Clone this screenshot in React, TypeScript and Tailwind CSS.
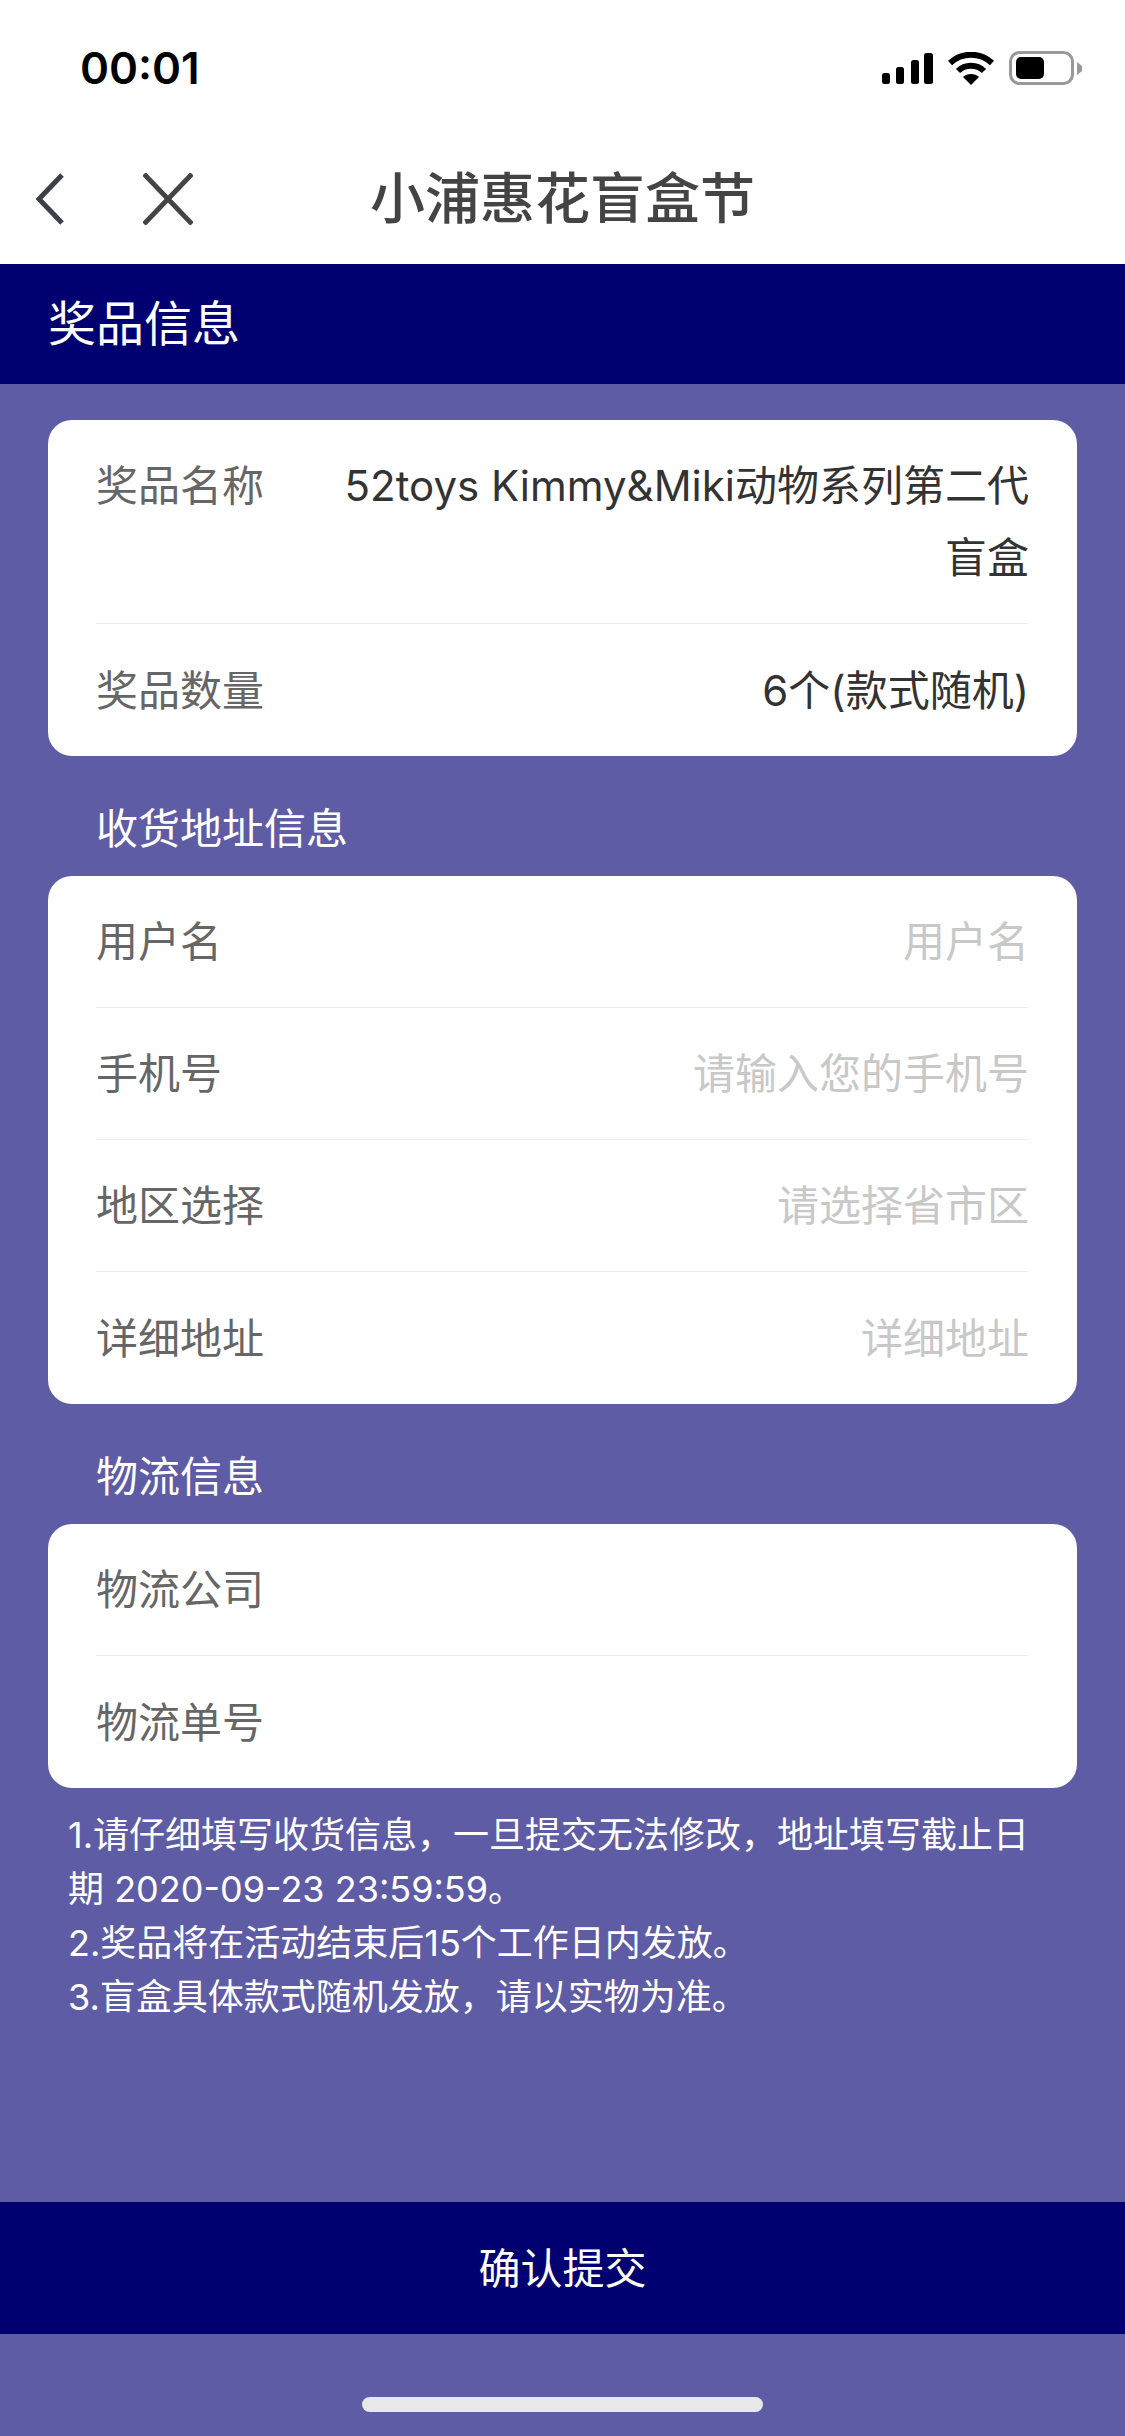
const font = { fontFamily: 'Inter, "Noto Sans CJK SC", sans-serif' };

function Row({ label, value, placeholder, border = true }: { label: string; value?: string; placeholder?: boolean; border?: boolean }) {
  return (
    <div className={`flex h-[132px] items-center justify-between ${border ? 'border-b border-[#eeeef2]' : ''}`}>
      <span className="text-[42px] text-[#666666]">{label}</span>
      {value && <span className={`text-[42px] ${placeholder ? 'text-[#c8c8c8]' : 'text-[#333333]'}`}>{value}</span>}
    </div>
  );
}

function SectionTitle({ children }: { children: string }) {
  return <div className="flex h-[120px] items-center pl-[96px] pt-[24px] text-[42px] text-white">{children}</div>;
}

export default function App() {
  return (
    <div style={font} className="flex h-[2436px] w-[1125px] flex-col overflow-hidden bg-[#5f5ca6]">
      <div className="flex h-[264px] flex-col bg-white">
        <div className="flex h-[132px] items-center justify-between pl-[80px] pr-[43px] pt-[4px]">
          <span className="text-[44px] font-semibold text-black">00:01</span>
          <div className="flex items-center gap-[15px]">
            <svg width="51" height="31" viewBox="0 0 51 31" fill="black">
              <rect x="0" y="20" width="8" height="11" rx="2.5" />
              <rect x="14" y="14" width="8" height="17" rx="2.5" />
              <rect x="29" y="7" width="8" height="24" rx="2.5" />
              <rect x="42" y="0" width="9" height="31" rx="2.5" />
            </svg>
            <svg width="46" height="33" viewBox="0 0 46 33" fill="none" stroke="black">
              <path d="M2 11 C14 0 32 0 44 11" strokeWidth="6" />
              <path d="M10 19 C17 12 29 12 36 19" strokeWidth="6" />
              <path d="M15 25 L23 33 L31 25 C27 21 19 21 15 25Z" fill="black" stroke="none" />
            </svg>
            <svg width="73" height="34" viewBox="0 0 73 34">
              <rect x="1.5" y="1.5" width="62" height="31" rx="9" fill="none" stroke="#999999" strokeWidth="3" />
              <rect x="7" y="6" width="28" height="22" rx="5" fill="black" />
              <path d="M68 11 L73 15 V20 L68 24 Z" fill="#999999" />
            </svg>
          </div>
        </div>
        <div className="relative flex h-[132px] items-center justify-center">
          <div className="absolute left-[35px] top-[41px] flex items-center gap-[79px]">
            <svg width="29" height="52" viewBox="0 0 29 52" fill="none" stroke="#3b3f4a" strokeWidth="5">
              <path d="M27 2 L4 26 L27 50" />
            </svg>
            <svg width="50" height="52" viewBox="0 0 50 52" fill="none" stroke="#444444" strokeWidth="5">
              <path d="M1 1 L49 51 M49 1 L1 51" />
            </svg>
          </div>
          <span className="text-[55px] font-medium text-[#444444]">小浦惠花盲盒节</span>
        </div>
      </div>
      <div className="flex h-[120px] items-center bg-[#000070] pl-[48px] text-[48px] text-white">奖品信息</div>

      <div className="mx-[48px] mt-[36px] rounded-[24px] bg-white px-[48px]">
        <div className="flex justify-between border-b border-[#eeeef2] pb-[29px] pt-[30px]">
          <span className="shrink-0 text-[42px] leading-[72px] text-[#666666]">奖品名称</span>
          <span className="w-[700px] text-right text-[42px] leading-[72px] text-[#333333]">52toys Kimmy&amp;Miki动物系列第二代盲盒</span>
        </div>
        <Row label="奖品数量" value="6个(款式随机)" border={false} />
      </div>

      <SectionTitle>收货地址信息</SectionTitle>
      <div className="mx-[48px] rounded-[24px] bg-white px-[48px]">
        <Row label="用户名" value="用户名" placeholder />
        <Row label="手机号" value="请输入您的手机号" placeholder />
        <Row label="地区选择" value="请选择省市区" placeholder />
        <Row label="详细地址" value="详细地址" placeholder border={false} />
      </div>

      <SectionTitle>物流信息</SectionTitle>
      <div className="mx-[48px] rounded-[24px] bg-white px-[48px]">
        <Row label="物流公司" />
        <Row label="物流单号" border={false} />
      </div>

      <div className="mt-[20px] pl-[68px] pr-[90px] text-[36px] leading-[54px] text-white">
        <p>1.请仔细填写收货信息，一旦提交无法修改，地址填写截止日期 2020-09-23 23:59:59。</p>
        <p>2.奖品将在活动结束后15个工作日内发放。</p>
        <p>3.盲盒具体款式随机发放，请以实物为准。</p>
      </div>

      <div className="mt-auto flex h-[234px] flex-col">
        <div className="flex h-[132px] items-center justify-center bg-[#000070] text-[42px] text-white">确认提交</div>
        <div className="flex flex-1 items-end justify-center pb-[24px]">
          <div className="h-[15px] w-[401px] rounded-full bg-[#e8e8e8]" />
        </div>
      </div>
    </div>
  );
}
